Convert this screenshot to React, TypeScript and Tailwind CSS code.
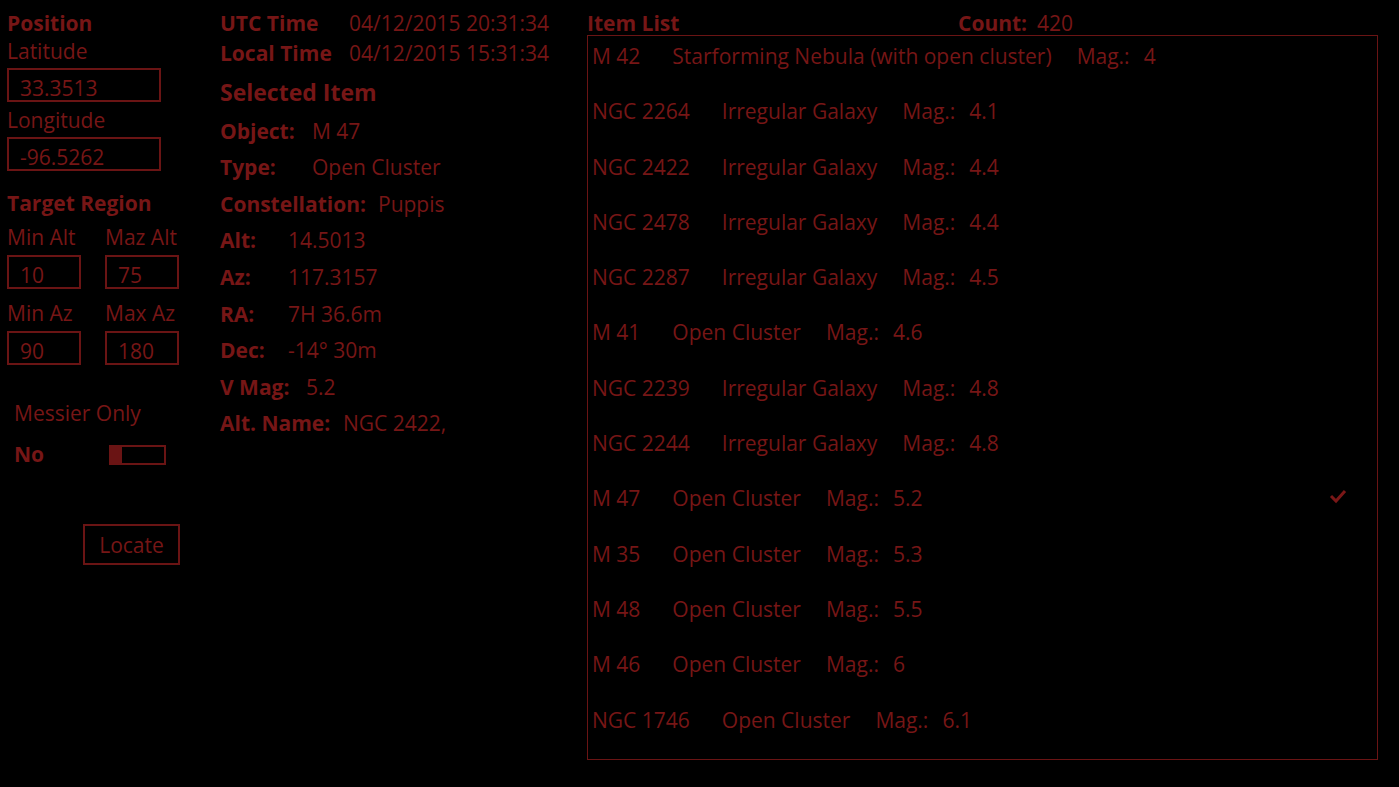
import React from 'react';

type Item = { name: string; type: string; mag: string; selected?: boolean };

const items: Item[] = [
  { name: 'M 42', type: 'Starforming Nebula (with open cluster)', mag: '4' },
  { name: 'NGC 2264', type: 'Irregular Galaxy', mag: '4.1' },
  { name: 'NGC 2422', type: 'Irregular Galaxy', mag: '4.4' },
  { name: 'NGC 2478', type: 'Irregular Galaxy', mag: '4.4' },
  { name: 'NGC 2287', type: 'Irregular Galaxy', mag: '4.5' },
  { name: 'M 41', type: 'Open Cluster', mag: '4.6' },
  { name: 'NGC 2239', type: 'Irregular Galaxy', mag: '4.8' },
  { name: 'NGC 2244', type: 'Irregular Galaxy', mag: '4.8' },
  { name: 'M 47', type: 'Open Cluster', mag: '5.2', selected: true },
  { name: 'M 35', type: 'Open Cluster', mag: '5.3' },
  { name: 'M 48', type: 'Open Cluster', mag: '5.5' },
  { name: 'M 46', type: 'Open Cluster', mag: '6' },
  { name: 'NGC 1746', type: 'Open Cluster', mag: '6.1' },
];

const details: { label: string; value: string; w: string }[] = [
  { label: 'Object:', value: 'M 47', w: 'w-[92px]' },
  { label: 'Type:', value: 'Open Cluster', w: 'w-[92px]' },
  { label: 'Constellation:', value: 'Puppis', w: 'w-[158px]' },
  { label: 'Alt:', value: '14.5013', w: 'w-[68px]' },
  { label: 'Az:', value: '117.3157', w: 'w-[68px]' },
  { label: 'RA:', value: '7H 36.6m', w: 'w-[68px]' },
  { label: 'Dec:', value: '-14° 30m', w: 'w-[68px]' },
  { label: 'V Mag:', value: '5.2', w: 'w-[86px]' },
  { label: 'Alt. Name:', value: 'NGC 2422,', w: 'w-[123px]' },
];

const Field = ({ value, wide }: { value: string; wide?: boolean }) => (
  <div
    className={`${wide ? 'w-[154px]' : 'w-[74px]'} h-[34px] border-2 border-[#6a1414] pl-[11px] pt-[5px] leading-[26px]`}
  >
    {value}
  </div>
);

const Check = () => (
  <svg width="18" height="16" viewBox="0 0 18 16" className="ml-auto mr-[30px] mt-[2px]">
    <polyline points="2,8 7,13 16,3" fill="none" stroke="#7a1717" strokeWidth="3" />
  </svg>
);

const App: React.FC = () => {
  return (
    <div
      className="w-[1399px] h-[787px] bg-black text-[#761616] flex overflow-hidden text-[21px]"
      style={{ fontFamily: '"Open Sans", "Noto Sans", sans-serif' }}
    >
      {/* Position / target region */}
      <div className="w-[220px] pl-[7px] pt-[11px] shrink-0">
        <div className="font-bold leading-[24px]">Position</div>
        <div className="mt-[4px] leading-[24px]">Latitude</div>
        <div className="mt-[5px]">
          <Field value="33.3513" wide />
        </div>
        <div className="mt-[6px] leading-[24px]">Longitude</div>
        <div className="mt-[5px]">
          <Field value="-96.5262" wide />
        </div>
        <div className="mt-[20px] font-bold leading-[24px]">Target Region</div>
        <div className="mt-[10px] flex leading-[24px]">
          <div className="w-[98px]">Min Alt</div>
          <div>Maz Alt</div>
        </div>
        <div className="mt-[6px] flex gap-[24px]">
          <Field value="10" />
          <Field value="75" />
        </div>
        <div className="mt-[12px] flex leading-[24px]">
          <div className="w-[98px]">Min Az</div>
          <div>Max Az</div>
        </div>
        <div className="mt-[6px] flex gap-[24px]">
          <Field value="90" />
          <Field value="180" />
        </div>
        <div className="mt-[36px] pl-[7px] leading-[24px]">Messier Only</div>
        <div className="mt-[18px] pl-[7px] flex items-center h-[24px]">
          <div className="w-[95px] font-bold">No</div>
          <div className="flex h-[20px]">
            <div className="w-[13px] h-full bg-[#6a1414]" />
            <div className="w-[44px] h-full border-2 border-l-0 border-[#6a1414]" />
          </div>
        </div>
        <div className="mt-[57px] pl-[76px]">
          <button className="w-[97px] h-[41px] border-2 border-[#6a1414] leading-[24px] text-[#761616] font-medium">
            Locate
          </button>
        </div>
      </div>

      {/* Time / selected item */}
      <div className="w-[367px] pt-[11px] shrink-0">
        <div className="flex leading-[24px]">
          <div className="w-[129px] font-bold">UTC Time</div>
          <div>04/12/2015 20:31:34</div>
        </div>
        <div className="flex leading-[24px] mt-[6px]">
          <div className="w-[129px] font-bold">Local Time</div>
          <div>04/12/2015 15:31:34</div>
        </div>
        <div className="mt-[14px] font-bold text-[23px] leading-[26px]">Selected Item</div>
        <div className="mt-[8px]">
          {details.map((d) => (
            <div key={d.label} className="flex h-[36.6px] items-center whitespace-nowrap">
              <div className={`${d.w} font-bold`}>{d.label}</div>
              <div>{d.value}</div>
            </div>
          ))}
        </div>
      </div>

      {/* Item list */}
      <div className="w-[791px] pt-[11px] shrink-0">
        <div className="flex leading-[24px]">
          <div className="w-[371px] font-bold">Item List</div>
          <div className="font-bold mr-[10px]">Count:</div>
          <div>420</div>
        </div>
        <div className="h-[725px] border border-[#6a1414] pl-[4px]">
          {items.map((it) => (
            <div key={it.name} className="h-[55.3px] pt-[8px] flex items-start">
              <div className="flex leading-[25px] whitespace-nowrap">
                <span className="mr-[32px]">{it.name}</span>
                <span className="mr-[25px]">{it.type}</span>
                <span className="mr-[14px]">Mag.:</span>
                <span>{it.mag}</span>
              </div>
              {it.selected && <Check />}
            </div>
          ))}
        </div>
      </div>
    </div>
  );
};

export default App;
